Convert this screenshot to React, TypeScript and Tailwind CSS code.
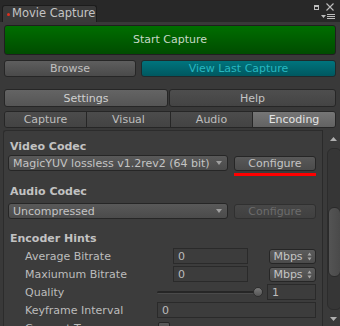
import React from "react";

const font = { fontFamily: '"DejaVu Sans", Verdana, sans-serif' };

function UpDown() {
  return (
    <svg width="5" height="9" viewBox="0 0 5 9" className="ml-[4px]">
      <path d="M0.5 3.5 L2.5 0.5 L4.5 3.5 Z" fill="#a8a8a8" />
      <path d="M0.5 5.5 L2.5 8.5 L4.5 5.5 Z" fill="#a8a8a8" />
    </svg>
  );
}

function Dropdown({ text, width }: { text: string; width: string }) {
  return (
    <div
      className={`${width} h-[16px] flex items-center justify-between rounded-[3px] border border-[#262626] bg-linear-to-b from-[#595959] to-[#4b4b4b] pl-[4px] pr-[5px] text-[11px] leading-none text-[#c4c4c4]`}
    >
      <span className="whitespace-nowrap">{text}</span>
      <svg width="6" height="4" viewBox="0 0 6 4">
        <path d="M0 0 L6 0 L3 4 Z" fill="#a0a0a0" />
      </svg>
    </div>
  );
}

function Input({ value, width, ml }: { value: string; width: string; ml?: string }) {
  return (
    <div
      className={`${width} ${ml ?? ""} h-[16px] flex items-center border border-[#2a2a2a] bg-[#3c3c3c] pl-[4px] text-[11px] leading-none text-[#bcbcbc]`}
    >
      {value}
    </div>
  );
}

function Mbps() {
  return (
    <div className="ml-[21px] w-[47px] h-[15px] flex items-center justify-center rounded-[3px] border border-[#262626] bg-linear-to-b from-[#5c5c5c] to-[#4b4b4b] text-[11px] leading-none text-[#c4c4c4]">
      <span>Mbps</span>
      <UpDown />
    </div>
  );
}

export default function App() {
  return (
    <div
      className="w-[340px] h-[326px] overflow-hidden bg-[#393939] flex flex-col"
      style={font}
    >
      {/* title strip */}
      <div className="h-[22px] shrink-0 bg-[#282828] flex items-end justify-between">
        <div className="ml-[2px] w-[95px] h-[17px] rounded-t-[3px] border border-b-0 border-[#1c1c1c] bg-[#3a3a3a] flex items-center pl-[4px]">
          <div className="w-[3px] h-[3px] rounded-full bg-[#e0301e] mr-[2px]" />
          <span className="text-[11.5px] leading-none text-[#c4c4c4] whitespace-nowrap">Movie Capture</span>
        </div>
        <div className="h-[22px] w-[30px] flex flex-col items-end pr-[6px] pt-[3px]">
          <div className="flex items-center gap-[7px]">
            <div className="w-[5px] h-[5px] border border-[#bdbdbd] border-t-2" />
            <svg width="8" height="8" viewBox="0 0 8 8">
              <path d="M0.5 0.5 L7.5 7.5 M7.5 0.5 L0.5 7.5" stroke="#bdbdbd" strokeWidth="1.1" />
            </svg>
          </div>
          <div className="flex items-center mt-[3px] -mr-[1px]">
            <svg width="5" height="3" viewBox="0 0 5 3" className="mr-[1px]">
              <path d="M0 0 L5 0 L2.5 3 Z" fill="#bdbdbd" />
            </svg>
            <div className="flex flex-col gap-[1px]">
              <div className="w-[8px] h-[1px] bg-[#bdbdbd]" />
              <div className="w-[8px] h-[1px] bg-[#bdbdbd]" />
              <div className="w-[8px] h-[1px] bg-[#bdbdbd]" />
            </div>
          </div>
        </div>
      </div>

      {/* buttons */}
      <div className="px-[4px] flex flex-col shrink-0">
        <div className="mt-[3px] h-[30px] rounded-[3px] border border-[#1f1f1f] bg-linear-to-b from-[#006e00] to-[#004c00] flex items-center justify-center text-[11px] text-[#c6d8c6]">
          Start Capture
        </div>
        <div className="mt-[5px] h-[17px] flex gap-[5px]">
          <div className="w-[132px] rounded-[3px] border border-[#262626] bg-linear-to-b from-[#5e5e5e] to-[#4a4a4a] flex items-center justify-center text-[11px] leading-none text-[#c0c0c0]">
            Browse
          </div>
          <div className="flex-1 rounded-[3px] border border-[#1f2a2c] bg-linear-to-b from-[#00747d] to-[#005860] flex items-center justify-center text-[11px] leading-none text-[#27b8c1]">
            View Last Capture
          </div>
        </div>
        <div className="mt-[12px] h-[18px] flex gap-[1px]">
          <div className="w-[164px] rounded-[3px] border border-[#262626] bg-linear-to-b from-[#646464] to-[#555555] flex items-center justify-center text-[11px] leading-none text-[#d0d0d0]">
            Settings
          </div>
          <div className="flex-1 rounded-[3px] border border-[#262626] bg-linear-to-b from-[#4e4e4e] to-[#444444] flex items-center justify-center text-[11px] leading-none text-[#c4c4c4]">
            Help
          </div>
        </div>
        <div className="mt-[4px] h-[17px] flex rounded-[3px] border border-[#262626] overflow-hidden">
          <div className="w-[82px] border-r border-[#262626] bg-linear-to-b from-[#4c4c4c] to-[#434343] flex items-center justify-center text-[11px] leading-none text-[#bebebe]">
            Capture
          </div>
          <div className="w-[84px] border-r border-[#262626] bg-linear-to-b from-[#4c4c4c] to-[#434343] flex items-center justify-center text-[11px] leading-none text-[#bebebe]">
            Visual
          </div>
          <div className="w-[82px] border-r border-[#262626] bg-linear-to-b from-[#4c4c4c] to-[#434343] flex items-center justify-center text-[11px] leading-none text-[#bebebe]">
            Audio
          </div>
          <div className="flex-1 bg-linear-to-b from-[#767676] to-[#626262] flex items-center justify-center text-[11px] leading-none text-[#e4e4e4]">
            Encoding
          </div>
        </div>
      </div>

      {/* panel */}
      <div className="mt-[2px] ml-[3px] flex flex-1 min-h-0">
        <div className="w-[319px] border-l border-t border-[#2c2c2c] rounded-tl-[3px] bg-[#3c3c3c] flex flex-col">
          <div className="pt-[9px] pl-[6px] h-[23px] text-[11px] leading-[13px] font-bold text-[#c2c2c2]">Video Codec</div>
          <div className="mt-[2px] flex items-start">
            <div className="ml-[4px]">
              <Dropdown text="MagicYUV lossless v1.2rev2 (64 bit)" width="w-[220px]" />
            </div>
            <div className="ml-[6px] mt-[1px] flex flex-col">
              <div className="w-[82px] h-[15px] rounded-[3px] border border-[#262626] bg-linear-to-b from-[#595959] to-[#4b4b4b] flex items-center justify-center text-[11px] leading-none text-[#c4c4c4]">
                Configure
              </div>
              <div className="mt-[2px] h-[3px] w-[82px] bg-[#ff0000]" />
            </div>
          </div>
          <div className="mt-[9px] pl-[6px] text-[11px] leading-[13px] font-bold text-[#c2c2c2]">Audio Codec</div>
          <div className="mt-[5px] flex items-start">
            <div className="ml-[4px]">
              <Dropdown text="Uncompressed" width="w-[220px]" />
            </div>
            <div className="ml-[6px] mt-[1px] w-[82px] h-[15px] rounded-[3px] border border-[#303030] bg-linear-to-b from-[#474747] to-[#404040] flex items-center justify-center text-[11px] leading-none text-[#6c6c6c]">
              Configure
            </div>
          </div>
          <div className="mt-[13px] pl-[6px] text-[11px] leading-[13px] font-bold text-[#c2c2c2]">Encoder Hints</div>

          <div className="mt-[3px] flex flex-col gap-[2px]">
            <div className="h-[16px] flex items-center">
              <div className="w-[153px] pl-[21px] text-[11px] leading-none text-[#bcbcbc]">Average Bitrate</div>
              <Input value="0" width="w-[75px]" ml="ml-[16px]" />
              <Mbps />
            </div>
            <div className="h-[16px] flex items-center">
              <div className="w-[153px] pl-[21px] text-[11px] leading-none text-[#bcbcbc]">Maxiumum Bitrate</div>
              <Input value="0" width="w-[75px]" ml="ml-[16px]" />
              <Mbps />
            </div>
            <div className="h-[16px] flex items-center">
              <div className="w-[153px] pl-[21px] text-[11px] leading-none text-[#bcbcbc]">Quality</div>
              <div className="w-[105px] h-[12px] flex items-center relative">
                <div className="w-[101px] h-[3px] rounded-full bg-[#262626] border-b border-[#4a4a4a]" />
                <div className="absolute right-[-1px] top-[1px] w-[10px] h-[10px] rounded-full bg-linear-to-b from-[#7a7a7a] to-[#555555] border border-[#2e2e2e]" />
              </div>
              <Input value="1" width="w-[49px]" ml="ml-[5px]" />
            </div>
            <div className="h-[16px] flex items-center">
              <div className="w-[153px] pl-[21px] text-[11px] leading-none text-[#bcbcbc]">Keyframe Interval</div>
              <Input value="0" width="w-[159px]" />
            </div>
            <div className="h-[16px] flex items-center">
              <div className="w-[154px] pl-[21px] text-[11px] leading-none text-[#bcbcbc]">Connect To</div>
              <div className="w-[12px] h-[12px] rounded-[2px] border border-[#262626] bg-linear-to-b from-[#5a5a5a] to-[#4a4a4a]" />
            </div>
          </div>
        </div>

        {/* scrollbar */}
        <div className="w-[18px] border-l border-[#2a2a2a] bg-[#3a3a3a] flex flex-col items-start">
          <svg width="7" height="4" viewBox="0 0 7 4" className="mt-[7px] ml-[7px]">
            <path d="M0 4 L7 4 L3.5 0 Z" fill="#b0b0b0" />
          </svg>
          <div className="mt-[7px] ml-[4px] w-[15px] h-[162px] shrink-0 rounded-[6px] border border-[#2c2c2c] bg-[#363636] flex flex-col">
            <div className="mt-[58px] h-[70px] rounded-[6px] border border-[#2a2a2a] bg-linear-to-r from-[#545454] to-[#4a4a4a]" />
          </div>
          <svg width="7" height="4" viewBox="0 0 7 4" className="mt-[7px] ml-[7px]">
            <path d="M0 0 L7 0 L3.5 4 Z" fill="#b0b0b0" />
          </svg>
        </div>
      </div>
    </div>
  );
}
